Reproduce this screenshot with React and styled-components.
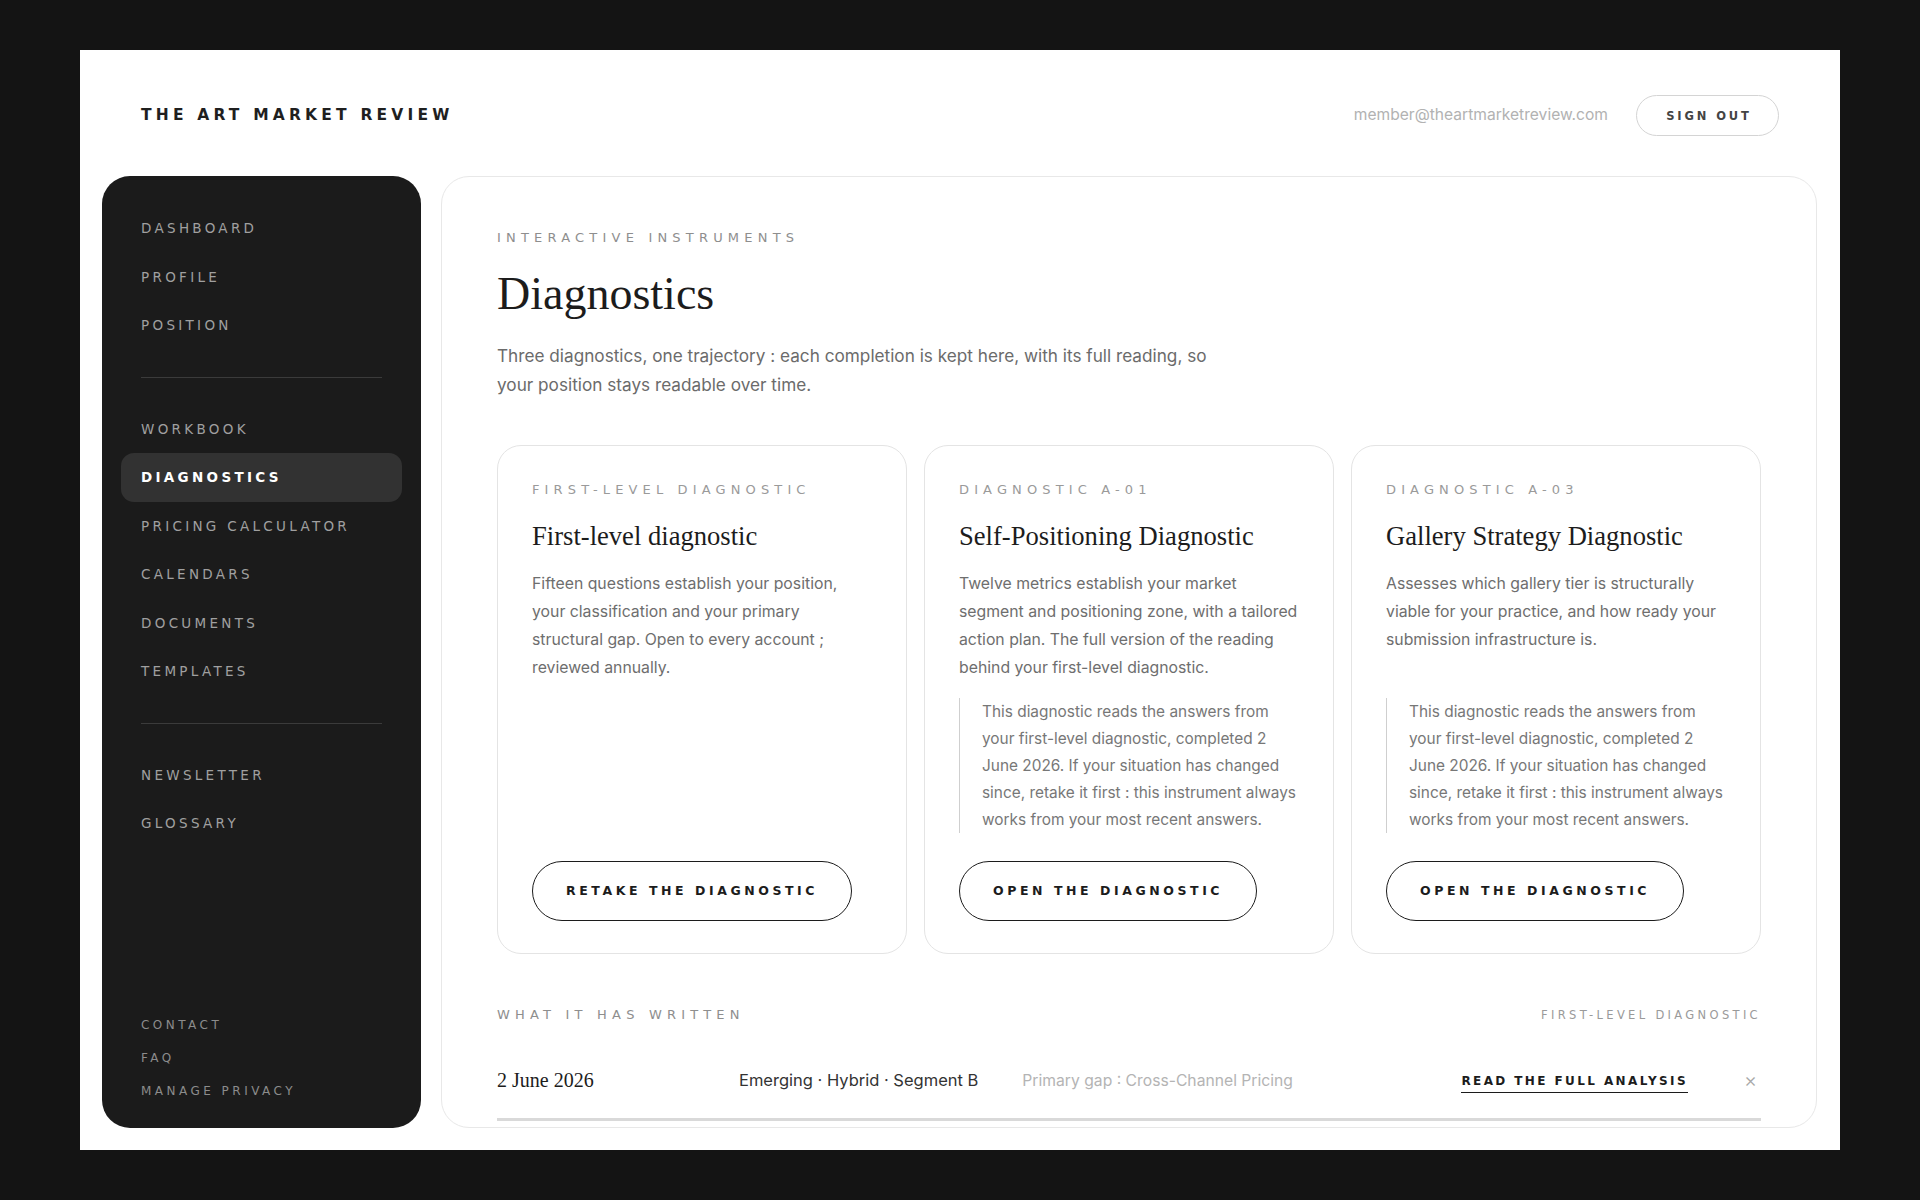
import React from 'react';
import styled, { createGlobalStyle } from 'styled-components';

const GlobalStyle = createGlobalStyle`
  * {
    box-sizing: border-box;
  }
  body {
    margin: 0;
    background: #141414;
    font-family: Inter, 'Liberation Sans', sans-serif;
  }
`;

const wide = `'DejaVu Sans', 'Liberation Sans', sans-serif`;
const serif = `'Liberation Serif', 'Times New Roman', serif`;

const mainNav = ['Dashboard', 'Profile', 'Position'];
const toolNav = [
  'Workbook',
  'Diagnostics',
  'Pricing Calculator',
  'Calendars',
  'Documents',
  'Templates',
];
const extraNav = ['Newsletter', 'Glossary'];
const footerNav = ['Contact', 'FAQ', 'Manage privacy'];

const note =
  'This diagnostic reads the answers from your first-level diagnostic, completed 2 June 2026. If your situation has changed since, retake it first : this instrument always works from your most recent answers.';

const diagnostics = [
  {
    label: 'First-level diagnostic',
    title: 'First-level diagnostic',
    text: 'Fifteen questions establish your position, your classification and your primary structural gap. Open to every account ; reviewed annually.',
    action: 'Retake the diagnostic',
  },
  {
    label: 'Diagnostic A-01',
    title: 'Self-Positioning Diagnostic',
    text: 'Twelve metrics establish your market segment and positioning zone, with a tailored action plan. The full version of the reading behind your first-level diagnostic.',
    note,
    action: 'Open the diagnostic',
  },
  {
    label: 'Diagnostic A-03',
    title: 'Gallery Strategy Diagnostic',
    text: 'Assesses which gallery tier is structurally viable for your practice, and how ready your submission infrastructure is.',
    note,
    action: 'Open the diagnostic',
  },
];

function App() {
  return (
    <>
      <GlobalStyle />
      <Page>
        <Frame>
          <Header>
            <Brand>The Art Market Review</Brand>
            <Account>
              <Email>member@theartmarketreview.com</Email>
              <SignOut>Sign out</SignOut>
            </Account>
          </Header>
          <Body>
            <Sidebar>
              <NavGroup>
                {mainNav.map((item) => (
                  <NavItem key={item}>{item}</NavItem>
                ))}
              </NavGroup>
              <Divider />
              <NavGroup>
                {toolNav.map((item) => (
                  <NavItem key={item} $active={item === 'Diagnostics'}>
                    {item}
                  </NavItem>
                ))}
              </NavGroup>
              <Divider />
              <NavGroup>
                {extraNav.map((item) => (
                  <NavItem key={item}>{item}</NavItem>
                ))}
              </NavGroup>
              <Footer>
                {footerNav.map((item) => (
                  <FooterLink key={item}>{item}</FooterLink>
                ))}
              </Footer>
            </Sidebar>

            <Main>
              <Eyebrow>Interactive instruments</Eyebrow>
              <Title>Diagnostics</Title>
              <Intro>
                Three diagnostics, one trajectory : each completion is kept
                here, with its full reading, so your position stays readable
                over time.
              </Intro>

              <Cards>
                {diagnostics.map((d) => (
                  <Card key={d.title}>
                    <CardLabel>{d.label}</CardLabel>
                    <CardTitle>{d.title}</CardTitle>
                    <CardText>{d.text}</CardText>
                    {d.note && <Note>{d.note}</Note>}
                    <PillButton $pushed={!d.note}>{d.action}</PillButton>
                  </Card>
                ))}
              </Cards>

              <HistoryHead>
                <Eyebrow>What it has written</Eyebrow>
                <SmallTag>First-level diagnostic</SmallTag>
              </HistoryHead>
              <HistoryRow>
                <RowDate>2 June 2026</RowDate>
                <RowSegment>Emerging · Hybrid · Segment B</RowSegment>
                <RowGap>Primary gap : Cross-Channel Pricing</RowGap>
                <ReadLink>Read the full analysis</ReadLink>
                <Close>×</Close>
              </HistoryRow>
            </Main>
          </Body>
        </Frame>
      </Page>
    </>
  );
}

export default App;

const Page = styled.div`
  min-height: 100vh;
  padding: 50px 80px;
`;

const Frame = styled.div`
  background: #fff;
  height: 1100px;
  display: flex;
  flex-direction: column;
  padding: 0 23px 22px 22px;
`;

const Header = styled.header`
  height: 126px;
  flex-shrink: 0;
  display: flex;
  align-items: center;
  justify-content: space-between;
  padding: 0 38px 0 39px;
`;

const Brand = styled.div`
  font-family: ${wide};
  font-weight: 700;
  font-size: 15.5px;
  letter-spacing: 0.27em;
  text-transform: uppercase;
  color: #1f1f1f;
  margin-top: 4px;
`;

const Account = styled.div`
  display: flex;
  align-items: center;
  gap: 28px;
  margin-top: 5px;
`;

const Email = styled.span`
  font-size: 15.6px;
  color: #b2b2b2;
  margin-top: -3px;
`;

const SignOut = styled.button`
  height: 41px;
  width: 143px;
  border: 1px solid #d4d4d4;
  border-radius: 999px;
  background: #fff;
  font-family: ${wide};
  font-size: 11.5px;
  font-weight: 700;
  letter-spacing: 0.25em;
  text-transform: uppercase;
  color: #444;
  padding: 0 0 0 3px;
  cursor: pointer;
`;

const Body = styled.div`
  flex: 1;
  min-height: 0;
  display: grid;
  grid-template-columns: 319px 1fr;
  gap: 20px;
`;

const Sidebar = styled.nav`
  background: #1b1b1b;
  border-radius: 28px;
  padding: 28px 19px 29px;
  display: flex;
  flex-direction: column;
`;

const NavGroup = styled.div`
  display: flex;
  flex-direction: column;
`;

const NavItem = styled.a`
  height: 48.5px;
  display: flex;
  align-items: center;
  padding: 0 20px;
  border-radius: 13px;
  font-family: ${wide};
  font-size: 13.5px;
  letter-spacing: 0.245em;
  text-transform: uppercase;
  font-weight: ${(p) => (p.$active ? 700 : 400)};
  color: ${(p) => (p.$active ? '#fff' : '#a0a0a0')};
  background: ${(p) => (p.$active ? '#323232' : 'transparent')};
  cursor: pointer;
`;

const Divider = styled.hr`
  border: 0;
  border-top: 1px solid #3b3b3b;
  margin: 27px 20px;
`;

const Footer = styled.div`
  margin-top: auto;
  display: flex;
  flex-direction: column;
  gap: 17px;
  padding: 0 20px;
`;

const FooterLink = styled.a`
  font-family: ${wide};
  font-size: 12px;
  line-height: 16px;
  letter-spacing: 0.29em;
  text-transform: uppercase;
  color: #8c8c8c;
  cursor: pointer;
`;

const Main = styled.main`
  border: 1px solid #e8e8e8;
  border-radius: 28px;
  padding: 53px 55px 6px;
  overflow: hidden;
  display: flex;
  flex-direction: column;
`;

const Eyebrow = styled.div`
  font-family: ${wide};
  font-size: 13px;
  line-height: 16px;
  letter-spacing: 0.4em;
  text-transform: uppercase;
  color: #8e8e8e;
`;

const Title = styled.h1`
  font-family: ${serif};
  font-weight: 400;
  font-size: 46px;
  line-height: 1.1;
  color: #1c1c1c;
  margin: 23px 0 0;
`;

const Intro = styled.p`
  font-size: 17.2px;
  line-height: 29px;
  color: #6b6b6b;
  max-width: 730px;
  margin: 21px 0 0;
`;

const Cards = styled.div`
  display: grid;
  grid-template-columns: repeat(3, 1fr);
  gap: 17px;
  margin-top: 46px;
`;

const Card = styled.article`
  border: 1px solid #e4e4e4;
  border-radius: 24px;
  padding: 36px 32px 32px 34px;
  display: flex;
  flex-direction: column;
`;

const CardLabel = styled.div`
  font-family: ${wide};
  font-size: 13px;
  line-height: 16px;
  letter-spacing: 0.395em;
  text-transform: uppercase;
  color: #9a9a9a;
`;

const CardTitle = styled.h2`
  font-family: ${serif};
  font-weight: 400;
  font-size: 26.6px;
  line-height: 32px;
  color: #1c1c1c;
  margin: 22px 0 0;
`;

const CardText = styled.p`
  font-size: 15.8px;
  line-height: 28px;
  color: #6e6e6e;
  margin: 18px 0 16px;
`;

const Note = styled.p`
  margin: auto 0 0;
  border-left: 1px solid #cfcfcf;
  padding-left: 22px;
  font-size: 15.4px;
  line-height: 27px;
  color: #777;
`;

const PillButton = styled.button`
  align-self: flex-start;
  margin-top: ${(p) => (p.$pushed ? 'auto' : '28px')};
  height: 60px;
  padding: 0 33px;
  border: 1.5px solid #1c1c1c;
  border-radius: 999px;
  background: #fff;
  font-family: ${wide};
  font-size: 12.5px;
  font-weight: 700;
  letter-spacing: 0.285em;
  text-transform: uppercase;
  color: #1c1c1c;
  cursor: pointer;
`;

const HistoryHead = styled.div`
  display: flex;
  align-items: center;
  justify-content: space-between;
  margin-top: 53px;
`;

const SmallTag = styled.span`
  font-family: ${wide};
  font-size: 11.5px;
  letter-spacing: 0.29em;
  text-transform: uppercase;
  color: #9a9a9a;
`;

const HistoryRow = styled.div`
  display: flex;
  align-items: center;
  height: 81px;
  margin-top: 17px;
  border-bottom: 3px solid #d9d9d9;
  padding-top: 3px;
`;

const RowDate = styled.span`
  width: 242px;
  font-family: ${serif};
  font-size: 20px;
  color: #1c1c1c;
`;

const RowSegment = styled.span`
  font-size: 16.5px;
  color: #333;
`;

const RowGap = styled.span`
  flex: 1;
  margin-left: 44px;
  font-size: 15.7px;
  color: #b4b4b4;
`;

const ReadLink = styled.a`
  font-family: ${wide};
  font-size: 12px;
  font-weight: 700;
  letter-spacing: 0.2em;
  text-transform: uppercase;
  color: #1c1c1c;
  padding-bottom: 4px;
  border-bottom: 1.5px solid #1c1c1c;
  margin-top: 6px;
  cursor: pointer;
`;

const Close = styled.span`
  margin-left: 56px;
  margin-right: 4px;
  font-size: 20px;
  color: #a8a8a8;
  font-weight: 300;
`;
